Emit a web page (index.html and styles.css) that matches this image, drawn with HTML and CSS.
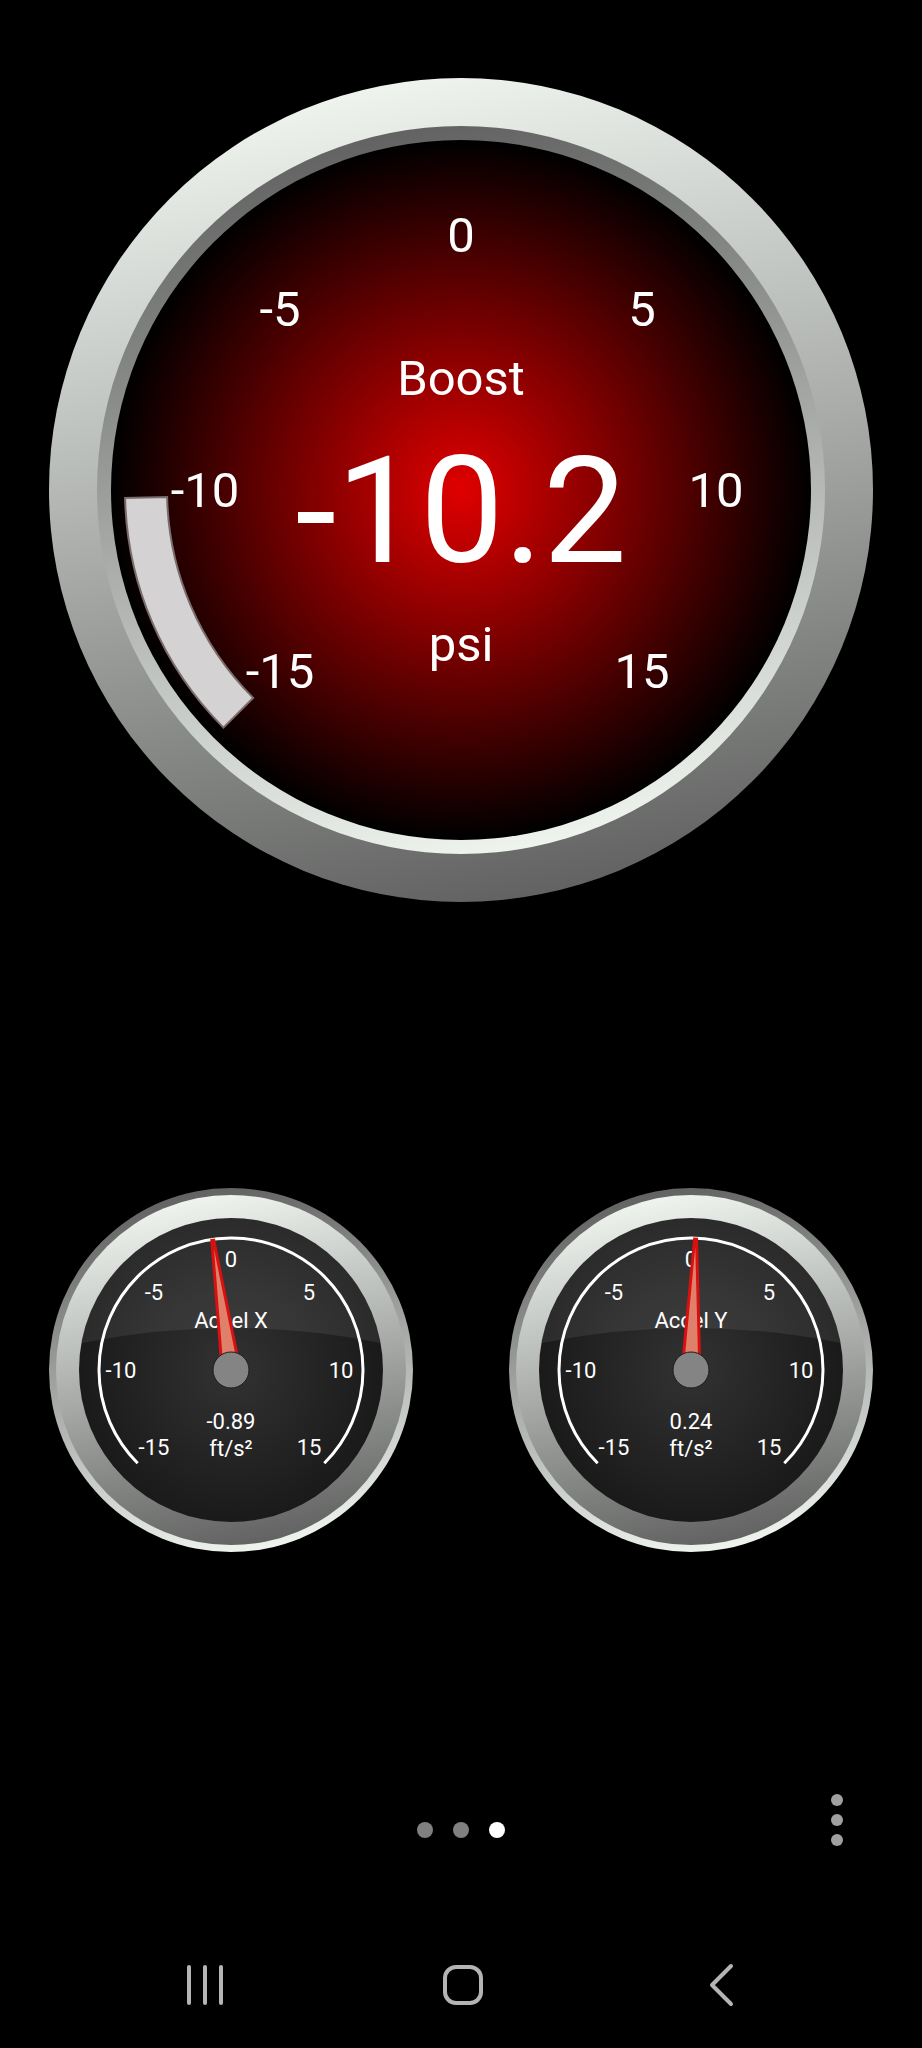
FILE: index.html
```
<!DOCTYPE html>
<html lang="en">
<head>
  <meta charset="UTF-8">
  <meta name="viewport" content="width=device-width, initial-scale=1.0">
  <title>Dashboard</title>
  <link rel="stylesheet" href="styles.css">
</head>
<body>
  <main class="dashboard">
    <!-- Boost gauge -->
    <svg class="gauge" viewBox="0 0 824 824" role="img" aria-label="Boost -10.2 psi">
      <defs>
        <linearGradient id="rim" x1="0.4" y1="0" x2="0.6" y2="1">
          <stop offset="0" stop-color="#f0f5f0"/>
          <stop offset="1" stop-color="#606160"/>
        </linearGradient>
        <linearGradient id="rimReverse" x1="0.4" y1="0" x2="0.6" y2="1">
          <stop offset="0" stop-color="#606160"/>
          <stop offset="1" stop-color="#f0f5f0"/>
        </linearGradient>
        <radialGradient id="redFace">
          <stop offset="0" stop-color="#e00000"/>
          <stop offset="1" stop-color="#000"/>
        </radialGradient>
        <radialGradient id="darkFace">
          <stop offset="0" stop-color="#323232"/>
          <stop offset="1" stop-color="#1a1a1a"/>
        </radialGradient>
      </defs>
      <circle cx="412" cy="412" r="412" fill="url(#rim)"/>
      <circle cx="412" cy="412" r="364" fill="url(#rimReverse)"/>
      <circle cx="412" cy="412" r="350" fill="url(#redFace)"/>
      <path class="level" d="M174.400 649.600A336 336 0 0 1 76.100 419.900L118.100 418.900A294 294 0 0 0 204.100 619.900Z"/>
      <g class="scale">
        <text x="231" y="610">-15</text>
        <text x="156" y="429">-10</text>
        <text x="231" y="248">-5</text>
        <text x="412" y="174">0</text>
        <text x="593" y="248">5</text>
        <text x="667" y="429">10</text>
        <text x="593" y="610">15</text>
        <text x="412" y="317">Boost</text>
        <text x="412" y="583">psi</text>
      </g>
      <text class="reading" x="412" y="484">-10.2</text>
    </svg>

    <!-- Accelerometer gauges -->
    <div class="small-gauges">
      <svg class="gauge" viewBox="0 0 364 364" role="img" aria-label="Accel X -0.89 ft/s²">
        <defs>
          <g id="dial">
            <circle cx="182" cy="182" r="182" fill="url(#rimReverse)"/>
            <circle cx="182" cy="182" r="175" fill="url(#rim)"/>
            <circle cx="182" cy="182" r="152" fill="url(#darkFace)"/>
            <path class="glass" d="M32.400 155A152 152 0 0 1 331.600 155A757 757 0 0 0 32.400 155Z"/>
            <path class="track" d="M88.700 275.300A132 132 0 1 1 275.300 275.300"/>
          </g>
          <g id="scaleSmall" class="scale-small">
            <text x="105" y="267">-15</text>
            <text x="72" y="190">-10</text>
            <text x="105" y="112">-5</text>
            <text x="182" y="79">0</text>
            <text x="260" y="112">5</text>
            <text x="292" y="190">10</text>
            <text x="260" y="267">15</text>
            <text x="182" y="268">ft/s²</text>
          </g>
          <path id="needle" class="needle" d="M181 51H183L190 168H174Z"/>
          <circle id="hub" class="hub" cx="182" cy="182" r="18"/>
        </defs>
        <use href="#dial"/>
        <use href="#scaleSmall"/>
        <g class="scale-small">
          <text x="182" y="140">Accel X</text>
          <text x="182" y="241">-0.89</text>
        </g>
        <use href="#needle" transform="rotate(-8 182 182)"/>
        <use href="#hub"/>
      </svg>

      <svg class="gauge" viewBox="0 0 364 364" role="img" aria-label="Accel Y 0.24 ft/s²">
        <use href="#dial"/>
        <use href="#scaleSmall"/>
        <g class="scale-small">
          <text x="182" y="140">Accel Y</text>
          <text x="182" y="241">0.24</text>
        </g>
        <use href="#needle" transform="rotate(2 182 182)"/>
        <use href="#hub"/>
      </svg>
    </div>
  </main>

  <!-- Page dots and overflow menu -->
  <div class="pager-bar">
    <div class="pager">
      <button class="dot" aria-label="Page 1"></button>
      <button class="dot" aria-label="Page 2"></button>
      <button class="dot active" aria-label="Page 3"></button>
    </div>
    <button class="more" aria-label="More options">
      <span></span><span></span><span></span>
    </button>
  </div>

  <!-- System navigation -->
  <nav class="navbar">
    <button class="nav-btn" aria-label="Recents">
      <svg width="48" height="48" viewBox="0 0 48 48"><path d="M8 6V42M24 6V42M40 6V42"/></svg>
    </button>
    <button class="nav-btn" aria-label="Home">
      <svg width="48" height="48" viewBox="0 0 48 48"><rect x="6" y="6" width="36" height="36" rx="11"/></svg>
    </button>
    <button class="nav-btn" aria-label="Back">
      <svg width="48" height="48" viewBox="0 0 48 48"><path d="M34 5L15 24L34 43"/></svg>
    </button>
  </nav>
</body>
</html>
```

FILE: styles.css
```
* {
  box-sizing: border-box;
}

body {
  margin: 0;
  min-height: 100vh;
  display: flex;
  flex-direction: column;
  background-color: #000;
  color: white;
  font-family: Roboto, sans-serif;
}

button {
  padding: 0;
  border: none;
  background: none;
  cursor: pointer;
}

/* Gauges */
.dashboard {
  padding: 78px 49px 0;
}

.gauge {
  display: block;
  width: 100%;
}

.small-gauges {
  display: grid;
  grid-template-columns: 1fr 1fr;
  gap: 96px;
  margin-top: 286px;
}

.gauge text {
  fill: white;
  text-anchor: middle;
}

.scale {
  font-size: 49px;
}

.reading {
  font-size: 149px;
}

.scale-small {
  font-size: 22px;
}

.level {
  fill: #d5d2d3;
  stroke: #7a6c6c;
  stroke-width: 2px;
}

.glass {
  fill: white;
  fill-opacity: 0.08;
}

.track {
  fill: none;
  stroke: white;
  stroke-width: 3px;
}

.needle {
  fill: #e0806a;
  stroke: #d81010;
  stroke-width: 3px;
}

.hub {
  fill: #848484;
  stroke: #1c1c1c;
  stroke-width: 1px;
}

/* Page dots and overflow menu */
.pager-bar {
  display: grid;
  grid-template-columns: 1fr auto 1fr;
  align-items: center;
  margin-top: auto;
  padding: 0 73px;
}

.pager {
  grid-column: 2;
  display: flex;
  gap: 20px;
  padding-top: 20px;
}

.dot {
  width: 16px;
  height: 16px;
  border-radius: 50%;
  background-color: #808080;
}

.dot.active {
  background-color: white;
}

.more {
  justify-self: end;
  display: flex;
  flex-direction: column;
  align-items: center;
  gap: 8px;
  width: 24px;
}

.more span {
  width: 12px;
  height: 12px;
  border-radius: 50%;
  background-color: #a0a0a0;
}

/* System navigation */
.navbar {
  display: grid;
  grid-template-columns: repeat(3, 1fr);
  margin-top: 115px;
  padding: 0 72px 39px 76px;
}

.nav-btn {
  display: flex;
  justify-content: center;
}

.nav-btn path,
.nav-btn rect {
  fill: none;
  stroke: #b4b4b4;
  stroke-width: 4px;
  stroke-linecap: round;
  stroke-linejoin: round;
}
```
